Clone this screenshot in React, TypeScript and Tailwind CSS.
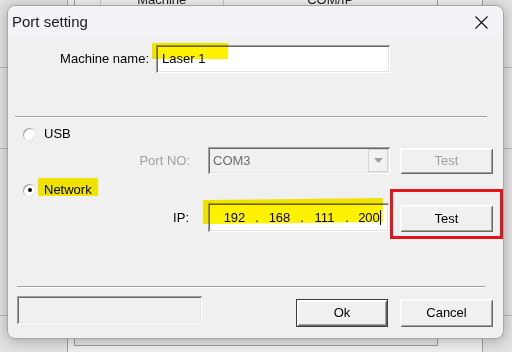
const sunken =
  'shadow-[inset_1px_1px_0_#a0a0a0,inset_-1px_-1px_0_#ffffff,inset_2px_2px_0_#696969,inset_-2px_-2px_0_#e3e3e3]'
const raised =
  'shadow-[inset_1px_1px_0_#ffffff,inset_-1px_-1px_0_#696969,inset_2px_2px_0_#f8f8f8,inset_-2px_-2px_0_#a0a0a0]'

function Radio({ checked }: { checked?: boolean }) {
  return (
    <span className="relative w-[13px] h-[13px] rounded-full bg-white shadow-[inset_1px_1px_0_#a0a0a0,inset_-1px_-1px_0_#e3e3e3] flex items-center justify-center">
      {checked && <span className="w-[4px] h-[4px] rounded-full bg-black" />}
    </span>
  )
}

export default function App() {
  const octets = ['192', '168', '111', '200']

  return (
    <div className="relative w-[512px] h-[352px] overflow-hidden bg-[#e2e2e2] font-['Liberation_Sans',Arial,sans-serif] text-[13px] text-black">
      {/* background grid lines */}
      <div className="absolute left-0 right-0 top-[67px] h-px bg-[#b8b8b8]" />
      <div className="absolute left-0 right-0 top-[148px] h-px bg-[#b8b8b8]" />
      <div className="absolute left-0 right-0 top-[315px] h-px bg-[#b8b8b8]" />

      {/* window behind the dialog */}
      <div className="absolute left-[67px] top-0 w-[416px] h-[352px] bg-[#f0f0f0] border-x border-[#a0a0a0]">
        <div className="ml-[6px] mt-[-11px] w-[364px] h-[357px] border border-[#a0a0a0] bg-[#fbfbfb] flex flex-col">
          <div className="flex h-[20px] bg-[#f0f0f0] border-b border-[#c8c8c8] text-[#222]">
            <div className="w-[26px] border-r border-[#c8c8c8]" />
            <div className="w-[123px] border-r border-[#c8c8c8] flex items-center justify-center">Machine</div>
            <div className="w-[214px] flex items-center justify-center">COM/IP</div>
          </div>
          <div className="flex-1" />
          <div className="h-[7px] bg-[#e8e8e8] border-t border-[#c0c0c0]" />
        </div>
      </div>

      {/* dialog */}
      <div className="absolute left-[7px] top-[5px] w-[497px] h-[334px] rounded-[8px] border border-[#a8a8a8] bg-[#f0f0f0] shadow-[0_2px_14px_rgba(0,0,0,0.28)] flex flex-col">
        <div className="h-[32px] rounded-t-[8px] bg-[#f3f2f6] flex items-center justify-between pl-[4px]">
          <span className="text-[15px] text-[#1a1a1a]">Port setting</span>
          <span className="w-[44px] h-full flex items-center justify-center">
            <svg width="13" height="13" viewBox="0 0 13 13">
              <path d="M0.5 0.5 L12.5 12.5 M12.5 0.5 L0.5 12.5" stroke="#111" strokeWidth="1.1" />
            </svg>
          </span>
        </div>

        <div className="flex flex-col">
          {/* machine name */}
          <div className="mt-[7px] h-[28px] flex items-center">
            <span className="w-[141px] text-right">Machine name:</span>
            <div className={`ml-[7px] w-[234px] h-[28px] bg-white pl-[6px] flex items-center ${sunken}`}>Laser 1</div>
          </div>

          <div className="mt-[43px] ml-[7px] w-[472px] border-t border-b border-t-[#a0a0a0] border-b-white" />

          {/* USB */}
          <div className="mt-[8px] h-[16px] pl-[15px] flex items-center gap-[8px]">
            <Radio />
            <span>USB</span>
          </div>

          <div className="mt-[5px] h-[27px] flex items-center">
            <span className="w-[182px] text-right text-[#a0a0a0]">Port NO:</span>
            <div className={`ml-[18px] w-[182px] h-[27px] bg-[#f0f0f0] pl-[5px] pr-[2px] flex items-center justify-between text-[#6d6d6d] ${sunken}`}>
              <span>COM3</span>
              <span className="w-[20px] h-[23px] border border-[#d4d4d4] bg-[#f2f2f2] flex items-center justify-center">
                <svg width="9" height="5" viewBox="0 0 9 5">
                  <path d="M0 0 H9 L4.5 5 Z" fill="#a0a0a0" />
                </svg>
              </span>
            </div>
            <button className={`ml-[10px] w-[93px] h-[26px] bg-[#f0f0f0] text-[#a0a0a0] ${raised}`}>Test</button>
          </div>

          {/* Network */}
          <div className="mt-[8px] h-[16px] pl-[15px] flex items-center gap-[8px]">
            <Radio checked />
            <span>Network</span>
          </div>

          <div className="mt-[5px] h-[29px] flex items-center">
            <span className="w-[181px] text-right">IP:</span>
            <div className={`ml-[19px] w-[181px] h-[29px] bg-white pl-[10px] flex items-center ${sunken}`}>
              {octets.map((o, i) => (
                <div key={o + i} className="flex items-center">
                  <span className="w-[33px] flex items-center justify-center">
                    {o}
                    {i === 3 && <span className="w-px h-[15px] bg-black" />}
                  </span>
                  {i < 3 && <span className="w-[12px] text-center">.</span>}
                </div>
              ))}
            </div>
            <button className={`ml-[11px] self-end w-[93px] h-[27px] bg-[#f0f0f0] ${raised}`}>Test</button>
          </div>

          <div className="mt-[54px] ml-[9px] w-[468px] border-t border-b border-t-[#a0a0a0] border-b-white" />

          {/* bottom buttons */}
          <div className="mt-[8px] flex items-start">
            <div className={`ml-[9px] w-[185px] h-[28px] bg-[#f0f0f0] ${sunken}`} />
            <button className="ml-[94px] mt-[3px] w-[92px] h-[28px] bg-[#f0f0f0] shadow-[inset_0_0_0_1px_#3c3c3c,inset_2px_2px_0_#ffffff,inset_-2px_-2px_0_#696969,inset_3px_3px_0_#f8f8f8,inset_-3px_-3px_0_#a0a0a0]">
              Ok
            </button>
            <button className={`ml-[12px] mt-[3px] w-[93px] h-[28px] bg-[#f0f0f0] ${raised}`}>Cancel</button>
          </div>
        </div>

        {/* highlighter marks */}
        <div className="absolute left-[144px] top-[37px] w-[76px] h-[16px] bg-[#fff200] mix-blend-multiply" />
        <div className="absolute left-[30px] top-[172px] w-[60px] h-[18px] bg-[#fff200] mix-blend-multiply" />
        <div className="absolute left-[195px] top-[193px] w-[180px] h-[24px] bg-[#fff200] mix-blend-multiply -rotate-[0.6deg]" />

        {/* red annotation */}
        <div className="absolute left-[382px] top-[183px] w-[113px] h-[50px] border-[3px] border-[#e4161c]" />
      </div>
    </div>
  )
}
